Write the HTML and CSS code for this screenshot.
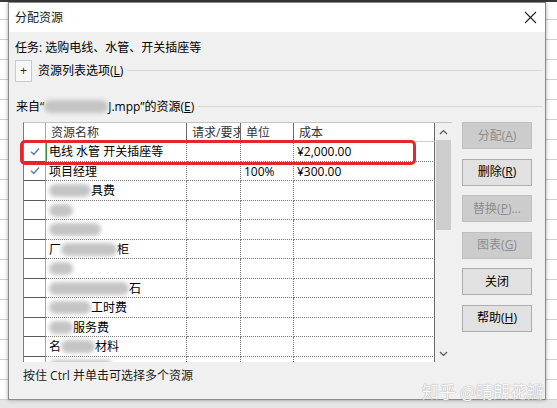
FILE: index.html
```html
<!DOCTYPE html>
<html lang="zh-CN">
<head>
<meta charset="utf-8">
<title>分配资源</title>
<link rel="stylesheet" href="styles.css">
</head>
<body>
<div class="dialog">
  <div class="titlebar">
    <span class="title">分配资源</span>
    <svg class="close" width="13" height="13" viewBox="0 0 13 13"><path d="M1 1L12 12M12 1L1 12" stroke="#222" stroke-width="1.1" fill="none"/></svg>
  </div>
  <div class="body">
    <div class="task">任务: 选购电线、水管、开关插座等</div>
    <div class="expander">
      <span class="plus">+</span>
      <span class="glabel">资源列表选项(<u>L</u>)</span>
      <span class="gline"></span>
    </div>
    <div class="group">
      <span class="glabel from">来自“<span class="smudge w64"></span>J.mpp”的资源(<u>E</u>)</span>
      <span class="gline"></span>
    </div>
    <div class="main">
      <div class="table">
        <div class="grid">
          <div class="row head">
            <div class="c sel"></div>
            <div class="c name">资源名称</div>
            <div class="c req">请求/要求</div>
            <div class="c unit">单位</div>
            <div class="c cost">成本</div>
          </div>
          <div class="row">
            <div class="c sel"><svg class="chk" width="10" height="9" viewBox="0 0 10 9"><path d="M1 4.8L3.8 7.4L9 1.4" stroke="#5f82ad" stroke-width="1.5" fill="none"/></svg></div>
            <div class="c name focus">电线 水管 开关插座等</div>
            <div class="c req"></div>
            <div class="c unit"></div>
            <div class="c cost">¥2,000.00</div>
          </div>
          <div class="row">
            <div class="c sel"><svg class="chk" width="10" height="9" viewBox="0 0 10 9"><path d="M1 4.8L3.8 7.4L9 1.4" stroke="#5f82ad" stroke-width="1.5" fill="none"/></svg></div>
            <div class="c name">项目经理</div>
            <div class="c req"></div>
            <div class="c unit">100%</div>
            <div class="c cost">¥300.00</div>
          </div>
          <div class="row">
            <div class="c sel"></div>
            <div class="c name"><span class="smudge w42"></span>具费</div>
            <div class="c req"></div><div class="c unit"></div><div class="c cost"></div>
          </div>
          <div class="row">
            <div class="c sel"></div>
            <div class="c name"><span class="smudge w24"></span></div>
            <div class="c req"></div><div class="c unit"></div><div class="c cost"></div>
          </div>
          <div class="row">
            <div class="c sel"></div>
            <div class="c name"><span class="smudge w52"></span></div>
            <div class="c req"></div><div class="c unit"></div><div class="c cost"></div>
          </div>
          <div class="row">
            <div class="c sel"></div>
            <div class="c name">厂<span class="smudge w56"></span>柜</div>
            <div class="c req"></div><div class="c unit"></div><div class="c cost"></div>
          </div>
          <div class="row">
            <div class="c sel"></div>
            <div class="c name"><span class="smudge w24"></span></div>
            <div class="c req"></div><div class="c unit"></div><div class="c cost"></div>
          </div>
          <div class="row">
            <div class="c sel"></div>
            <div class="c name"><span class="smudge w80"></span>石</div>
            <div class="c req"></div><div class="c unit"></div><div class="c cost"></div>
          </div>
          <div class="row">
            <div class="c sel"></div>
            <div class="c name"><span class="smudge w42"></span>工时费</div>
            <div class="c req"></div><div class="c unit"></div><div class="c cost"></div>
          </div>
          <div class="row">
            <div class="c sel"></div>
            <div class="c name"><span class="smudge w24"></span>服务费</div>
            <div class="c req"></div><div class="c unit"></div><div class="c cost"></div>
          </div>
          <div class="row">
            <div class="c sel"></div>
            <div class="c name">名<span class="smudge w34"></span>材料</div>
            <div class="c req"></div><div class="c unit"></div><div class="c cost"></div>
          </div>
          <div class="row">
            <div class="c sel"></div>
            <div class="c name"><span class="smudge w64"></span></div>
            <div class="c req"></div><div class="c unit"></div><div class="c cost"></div>
          </div>
        </div>
        <div class="scroll">
          <div class="arrow"><svg width="9" height="6" viewBox="0 0 9 6"><path d="M1 5L4.5 1.5L8 5" stroke="#555" stroke-width="1.2" fill="none"/></svg></div>
          <div class="thumb"></div>
          <div class="track"></div>
          <div class="arrow"><svg width="9" height="6" viewBox="0 0 9 6"><path d="M1 1L4.5 4.5L8 1" stroke="#555" stroke-width="1.2" fill="none"/></svg></div>
        </div>
        <div class="annot"></div>
      </div>
      <div class="buttons">
        <div class="btn off">分配(<u>A</u>)</div>
        <div class="btn">删除(<u>R</u>)</div>
        <div class="btn off">替换(<u>P</u>)...</div>
        <div class="btn off">图表(<u>G</u>)</div>
        <div class="btn">关闭</div>
        <div class="btn">帮助(<u>H</u>)</div>
      </div>
    </div>
    <div class="hint">按住 Ctrl 并单击可选择多个资源</div>
  </div>
  <div class="watermark">知乎 @晴朗花瓣</div>
</div>
</body>
</html>
```

FILE: styles.css
```css
html, body {
  margin: 0;
  padding: 0;
}
body {
  width: 557px;
  height: 408px;
  overflow: hidden;
  font-family: "Open Sans", "Noto Sans CJK SC", sans-serif;
  font-size: 12px;
  color: #000;
  background:
    linear-gradient(#3a3a3a 0, #3a3a3a 2px, transparent 2px),
    linear-gradient(to top, #e6e6e6 0, #e6e6e6 8px, transparent 8px),
    repeating-linear-gradient(to bottom, #ffffff 0, #ffffff 19px, #cfcfcf 19px, #cfcfcf 20px),
    #ffffff;
}
.dialog {
  position: relative;
  margin: 2px 0 0 8px;
  width: 538px;
  height: 398px;
  box-sizing: border-box;
  border: 1px solid #8a8a8a;
  background: #f0f0f0;
  box-shadow: 0 0 4px rgba(0,0,0,0.35);
  display: flex;
  flex-direction: column;
}
.titlebar {
  height: 29px;
  background: #ffffff;
  display: flex;
  align-items: center;
  justify-content: space-between;
  padding: 0 8px 0 6px;
}
.title {
  line-height: 16px;
  color: #1a1a1a;
}
.close {
  display: block;
  margin-top: -1px;
}
.body {
  padding: 0 2px 0 6px;
  display: flex;
  flex-direction: column;
}
.task {
  margin-top: 8px;
  line-height: 16px;
}
.expander {
  margin-top: 4px;
  height: 22px;
  display: flex;
  align-items: center;
}
.plus {
  width: 17px;
  height: 22px;
  box-sizing: border-box;
  border: 1px solid #c8c8c8;
  background: #f7f7f7;
  display: flex;
  align-items: center;
  justify-content: center;
  font-size: 12px;
  line-height: 1;
  color: #222;
}
.glabel {
  line-height: 16px;
  white-space: nowrap;
  margin-left: 6px;
}
.glabel.from {
  margin-left: 1px;
}
.gline {
  flex: 1;
  border-top: 1px solid #d8d8d8;
  margin: 0 0 0 4px;
  align-self: center;
  margin-top: -2px;
}
.group {
  margin-top: 17px;
  display: flex;
  align-items: center;
}
.smudge {
  display: inline-block;
  height: 13px;
  vertical-align: -2px;
  background: #c4c4c4;
  border-radius: 7px;
  filter: blur(2px);
}
.w24 { width: 24px; }
.w34 { width: 34px; }
.w42 { width: 42px; }
.w52 { width: 52px; }
.w56 { width: 56px; }
.w64 { width: 64px; }
.w80 { width: 80px; }

.main {
  margin-top: 7px;
  margin-left: 8px;
  display: flex;
  align-items: flex-start;
}
.table {
  position: relative;
  height: 240px;
  display: flex;
  border-left: 1px solid #7a7a7a;
  border-top: 1px solid #c4c4c4;
  box-sizing: border-box;
  background: #ffffff;
}
.grid {
  width: 411px;
  height: 239px;
  overflow: hidden;
  display: flex;
  flex-direction: column;
}
.row {
  display: grid;
  grid-template-columns: 22px 141px 54px 53px 141px;
  height: 19.5px;
  flex: none;
}
.row.head {
  height: 19px;
}
.c {
  box-sizing: border-box;
  border-right: 1px dotted #7d7d7d;
  border-bottom: 1px dotted #7d7d7d;
  padding-left: 3px;
  line-height: 19px;
  white-space: nowrap;
  overflow: hidden;
  background: #ffffff;
}
.c.sel {
  border-right: 1px solid #a8a8a8;
  border-bottom: 1px solid #5a5a5a;
  display: flex;
  align-items: center;
  justify-content: center;
  padding: 0;
}
.c.cost {
  border-right: 1px solid #6a6a6a;
}
.head .c {
  border-right: 1px solid #6a6a6a;
  border-bottom: 1px solid #d0d0d0;
  padding-left: 5px;
  color: #333;
  line-height: 19px;
}
.head .c.req {
  text-overflow: clip;
  padding-right: 0;
}
.head .c.sel {
  border-right: 1px solid #a8a8a8;
  border-bottom: 1px solid #d0d0d0;
}
.c.focus {
  box-shadow: inset 1px 0 0 #3e9142;
}
.chk {
  display: block;
}
.scroll {
  width: 17px;
  height: 239px;
  background: #f0f0f0;
  display: flex;
  flex-direction: column;
}
.arrow {
  height: 17px;
  display: flex;
  align-items: center;
  justify-content: center;
  flex: none;
}
.thumb {
  margin-left: 1px;
  width: 15px;
  height: 90px;
  background: #cdcdcd;
  flex: none;
}
.track {
  flex: 1;
}
.annot {
  position: absolute;
  left: -4px;
  top: 17px;
  width: 396px;
  height: 25px;
  box-sizing: border-box;
  border: 3px solid #e2282c;
  border-radius: 5px;
}
.buttons {
  margin-left: 10px;
  display: flex;
  flex-direction: column;
  gap: 9.6px;
}
.btn {
  width: 70px;
  height: 27px;
  box-sizing: border-box;
  border: 1px solid #adadad;
  background: #e1e1e1;
  display: flex;
  align-items: center;
  justify-content: center;
  line-height: 16px;
  white-space: nowrap;
}
.btn.off {
  background: #cccccc;
  border-color: #bfbfbf;
  color: #8d8d8d;
}
.hint {
  margin-top: 6px;
  margin-left: 8px;
  line-height: 16px;
  color: #1a1a1a;
}
.watermark {
  position: absolute;
  right: 1px;
  bottom: -3px;
  font-family: "Noto Sans CJK SC", sans-serif;
  font-size: 17px;
  line-height: 22px;
  color: #fafafa;
  text-shadow: 0 0 1px #a8a8a8, 0 0 1px #b4b4b4;
  white-space: nowrap;
}
```
